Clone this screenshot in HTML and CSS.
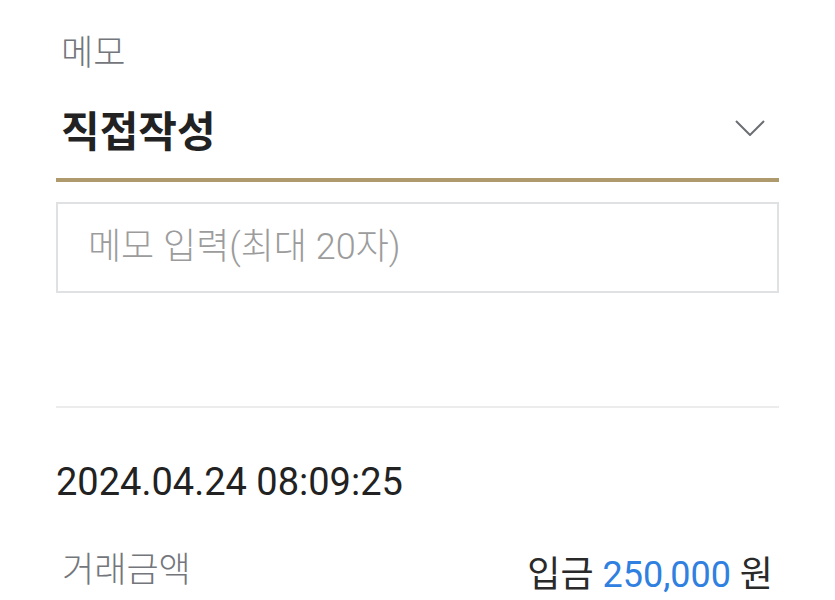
FILE: index.html
```html
<!DOCTYPE html>
<html lang="ko">
<head>
    <meta charset="UTF-8">
    <meta name="viewport" content="width=device-width, initial-scale=1.0">
    <title>메모</title>
    <link rel="stylesheet" href="styles.css">
</head>
<body>
    <div class="memo-section">
        <div class="field-label">메모</div>
        <div class="memo-select">
            <span class="select-value">직접작성</span>
            <svg class="chevron" width="30" height="16" viewBox="0 0 30 16">
                <polyline points="1,1 15,15 29,1" fill="none" stroke="#6b6e73" stroke-width="2"/>
            </svg>
        </div>
        <div class="memo-input">메모 입력(최대 20자)</div>
    </div>

    <!-- 거래 정보 -->
    <div class="detail-section">
        <div class="trade-date">2024.04.24 08:09:25</div>
        <div class="detail-row">
            <span class="field-label">거래금액</span>
            <span class="amount">입금 <span class="amount-value">250,000</span> 원</span>
        </div>
    </div>
</body>
</html>
```

FILE: styles.css
```css
body {
    margin: 0;
    padding: 0 56px;
    background-color: #fff;
    font-family: Roboto, "Noto Sans CJK KR", sans-serif;
    color: #222;
}
.field-label {
    font-size: 35px;
    font-weight: 300;
    line-height: 36px;
    padding-left: 5px;
    color: #73767b;
}
.memo-section {
    padding-top: 36px;
}
.memo-select {
    display: flex;
    align-items: center;
    justify-content: space-between;
    height: 72px;
    padding: 20px 14px 14px 5px;
    border-bottom: 4px solid #ae9a6d;
}
.select-value {
    font-size: 42px;
    font-weight: bold;
    color: #222;
}
.memo-input {
    margin-top: 20px;
    height: 87px;
    line-height: 87px;
    padding-left: 30px;
    border: 2px solid #e0e1e3;
    font-size: 36px;
    font-weight: 300;
    color: #9c9c9c;
}
.detail-section {
    margin-top: 113px;
    border-top: 2px solid #ececec;
}
.trade-date {
    margin-top: 50px;
    font-size: 38px;
    line-height: 48px;
    color: #222;
}
.detail-row {
    display: flex;
    align-items: center;
    justify-content: space-between;
    margin-top: 39px;
    padding: 0 6px 0 1px;
}
.amount {
    font-size: 36px;
    color: #2a2a2a;
}
.amount-value {
    color: #2f80e0;
}
```
